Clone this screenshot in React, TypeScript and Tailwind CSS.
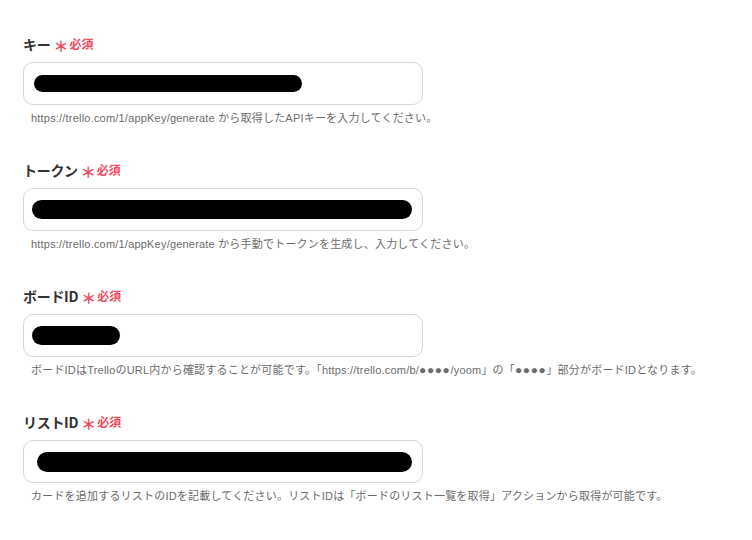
import React from 'react';

type Field = {
  label: string;
  help: React.ReactNode;
  barLeft: number;
  barWidth: number;
  barHeight: number;
};

const Dots = () => <span className="text-[12px] tracking-[0.6px]">●●●●</span>;

const fields: Field[] = [
  {
    label: 'キー',
    help: 'https://trello.com/1/appKey/generate から取得したAPIキーを入力してください。',
    barLeft: 11,
    barWidth: 268,
    barHeight: 17,
  },
  {
    label: 'トークン',
    help: 'https://trello.com/1/appKey/generate から手動でトークンを生成し、入力してください。',
    barLeft: 9,
    barWidth: 380,
    barHeight: 19,
  },
  {
    label: 'ボードID',
    help: (
      <>
        ボードIDはTrelloのURL内から確認することが可能です。「https://trello.com/b/<Dots />/yoom」の「<Dots />」部分がボードIDとなります。
      </>
    ),
    barLeft: 9,
    barWidth: 88,
    barHeight: 19,
  },
  {
    label: 'リストID',
    help: 'カードを追加するリストのIDを記載してください。リストIDは「ボードのリスト一覧を取得」アクションから取得が可能です。',
    barLeft: 14,
    barWidth: 375,
    barHeight: 20,
  },
];

const FormField: React.FC<{ field: Field }> = ({ field }) => {
  return (
    <div className="flex flex-col">
      <div className="flex items-center h-[20px]">
        <span className="text-[14px] font-semibold text-[#333333] tracking-[-0.3px]">
          {field.label}
        </span>
        <span className="ml-[3px] text-[15px] font-bold text-[#f04a5e] leading-none mt-[3px]">
          ＊
        </span>
        <span className="ml-[1px] text-[12px] font-bold text-[#f04a5e] leading-none">
          必須
        </span>
      </div>

      {/* 入力欄（値は黒塗り） */}
      <div className="mt-[8px] w-[400px] h-[43px] border border-[#d4d6dc] rounded-[10px] bg-white flex items-center">
        <div
          className="bg-black rounded-full"
          style={{ marginLeft: field.barLeft - 1, width: field.barWidth, height: field.barHeight }}
        />
      </div>

      <p
        className="mt-[5px] ml-[8px] h-[16px] leading-[16px] text-[11px] text-[#6b6b6b] whitespace-nowrap tracking-[0.2px]"
        style={{ fontFamily: '"Liberation Sans", "Noto Sans CJK JP", sans-serif' }}
      >
        {field.help}
      </p>
    </div>
  );
};

const App: React.FC = () => {
  return (
    <div
      className="min-h-screen w-[752px] bg-white"
      style={{ fontFamily: '"Noto Sans CJK JP", "Noto Sans", sans-serif' }}
    >
      <div className="pl-[23px] pt-[34px] flex flex-col gap-[34px]">
        {fields.map((f) => (
          <FormField key={f.label} field={f} />
        ))}
      </div>
    </div>
  );
};

export default App;
